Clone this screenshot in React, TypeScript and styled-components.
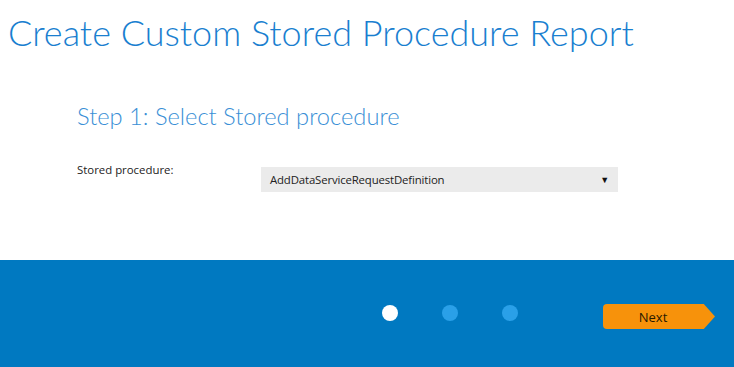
import React from 'react';
import styled, { createGlobalStyle } from 'styled-components';

const GlobalStyle = createGlobalStyle`
  html, body {
    margin: 0;
    padding: 0;
    background: #ffffff;
  }
  body {
    font-family: 'Open Sans', 'Noto Sans', sans-serif;
  }
`;

const Page = styled.div`
  width: 734px;
  height: 367px;
  display: flex;
  flex-direction: column;
  overflow: hidden;
`;

const Content = styled.div`
  height: 260px;
  display: flex;
  flex-direction: column;
`;

const Title = styled.h1`
  margin: 0;
  padding: 9px 0 0 8px;
  font-family: Lato, sans-serif;
  font-weight: 300;
  font-size: 36px;
  line-height: 46px;
  color: #1a7fd0;
`;

const StepTitle = styled.h2`
  margin: 0;
  padding: 47px 0 0 77px;
  font-family: Lato, sans-serif;
  font-weight: 300;
  font-size: 23.7px;
  line-height: 28px;
  color: #3a8fd6;
`;

const FieldRow = styled.div`
  display: flex;
  align-items: flex-start;
  padding: 33px 0 0 77px;
`;

const Label = styled.label`
  width: 184px;
  font-size: 11.4px;
  line-height: 14px;
  color: #222;
`;

const Select = styled.div`
  width: 357px;
  height: 25px;
  margin-top: 4px;
  background: #ebebeb;
  display: flex;
  align-items: center;
  justify-content: space-between;
  padding: 0 9px 0 9px;
  box-sizing: border-box;
  font-size: 11.4px;
  letter-spacing: -0.15px;
  color: #222;
`;

const Caret = styled.span`
  font-size: 9px;
  color: #111;
`;

const Footer = styled.div`
  flex: 1;
  background: #0079c1;
  display: flex;
  align-items: flex-start;
  padding-top: 44px;
`;

const Dots = styled.div`
  display: flex;
  gap: 44px;
  margin-left: 382px;
  margin-top: 1px;
`;

const Dot = styled.span<{ $active?: boolean }>`
  width: 16px;
  height: 16px;
  border-radius: 50%;
  background: ${(p) => (p.$active ? '#ffffff' : '#2aa0e8')};
`;

const NextButton = styled.button`
  margin-left: 85px;
  width: 112px;
  height: 25px;
  border: none;
  padding: 0 12px 0 0;
  background: #f7920b;
  color: #2a1a00;
  font-family: 'Open Sans', 'Noto Sans', sans-serif;
  font-size: 13px;
  border-radius: 4px 0 0 4px;
  clip-path: polygon(0 0, 90% 0, 100% 50%, 90% 100%, 0 100%);
  cursor: pointer;
`;

const App: React.FC = () => {
  return (
    <Page>
      <GlobalStyle />
      <Content>
        <Title>Create Custom Stored Procedure Report</Title>
        <StepTitle>Step 1: Select Stored procedure</StepTitle>
        <FieldRow>
          <Label>Stored procedure:</Label>
          <Select>
            <span>AddDataServiceRequestDefinition</span>
            <Caret>▼</Caret>
          </Select>
        </FieldRow>
      </Content>
      <Footer>
        <Dots>
          <Dot $active />
          <Dot />
          <Dot />
        </Dots>
        <NextButton>Next</NextButton>
      </Footer>
    </Page>
  );
};

export default App;
